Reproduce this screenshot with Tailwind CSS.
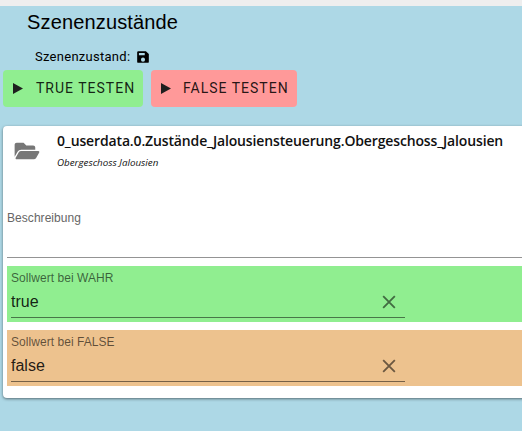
<!DOCTYPE html>
<html lang="de">
<head>
  <meta charset="UTF-8" />
  <title>Szenenzustände</title>
  <script src="https://cdn.jsdelivr.net/npm/@tailwindcss/browser@4"></script>
</head>
<body class="h-[431px] w-[522px] overflow-hidden bg-[#add8e6] font-['Liberation_Sans',sans-serif]">
  <div class="h-[6px] bg-[#eeeeee]"></div>
  <h1 class="pl-[27px] pt-[5px] text-[20px] tracking-[0.15px] leading-[23px] text-black">Szenenzustände</h1>
  <div class="flex items-center pl-[35px] pt-[13px] h-[32px] font-['Roboto',sans-serif] text-[13px] tracking-[0.27px] text-black">
    <span>Szenenzustand:</span>
    <svg class="ml-[6px] w-[14px] h-[14px]" viewBox="0 0 24 24" fill="#000"><path d="M17 2H4a2 2 0 0 0-2 2v16a2 2 0 0 0 2 2h16a2 2 0 0 0 2-2V7l-5-5zm-5 18a3.5 3.5 0 1 1 0-7 3.5 3.5 0 0 1 0 7zm3-11H5V5h10v4z"/></svg>
  </div>
  <div class="flex gap-2 pl-[3px] pt-[4px] font-['Roboto',sans-serif] text-[14px] tracking-[1px]">
    <button class="flex items-center w-[140px] h-[37px] pl-[9px] rounded bg-[#90ee90] text-black/87">
      <svg class="w-[13px] h-[13px] mr-[11px]" viewBox="0 0 13 13" fill="#1f1f1f"><path d="M1 1v11l10-5.500z"/></svg>
      TRUE TESTEN
    </button>
    <button class="flex items-center w-[146px] h-[37px] pl-[9px] rounded bg-[#ff9999] text-black/87">
      <svg class="w-[13px] h-[13px] mr-[10px]" viewBox="0 0 13 13" fill="#1f1f1f"><path d="M1 1v11l10-5.500z"/></svg>
      FALSE TESTEN
    </button>
  </div>
  <div class="ml-[3px] mt-[19px] w-[530px] h-[272px] rounded bg-white shadow-[0_1px_3px_rgba(0,0,0,0.5)]">
    <div class="flex h-[83px]">
      <svg class="ml-[11px] mt-[14px] w-[26px] h-[22px]" viewBox="0 0 576 512" fill="#777"><path d="M572.700 292.100 500.300 416.200A64 64 0 0 1 445 448H45c-18.500 0-30.100-20.100-20.700-36.100l72.400-124.200A64 64 0 0 1 152 256h400c18.500 0 30.100 20.100 20.700 36.100zM152 224h328v-48c0-26.500-21.500-48-48-48H272l-64-64H48C21.500 64 0 85.500 0 112v278l69.100-118.400C86.200 242.300 117.900 224 152 224z"/></svg>
      <div class="ml-[17px] pt-[5px]">
        <div class="font-['Open_Sans',sans-serif] font-semibold text-[14px] tracking-[-0.14px] leading-[20px] text-[#111] whitespace-nowrap">0_userdata.0.Zustände_Jalousiensteuerung.Obergeschoss_Jalousien</div>
        <div class="mt-[6px] font-['Open_Sans',sans-serif] italic text-[9.800px] leading-[12px] text-[#111]">Obergeschoss Jalousien</div>
      </div>
    </div>
    <div class="mx-[4px] h-[49px] border-b border-[#949494] text-[12px] tracking-[0.05px] text-[#666]">Beschreibung</div>
    <div class="ml-[4px] mt-[8px] h-[56px] bg-[#90ee90] px-[4px] pt-[5px]">
      <div class="text-[12px] tracking-[0.05px] leading-[14px] text-black/60">Sollwert bei WAHR</div>
      <div class="flex items-center justify-between w-[394px] h-[33px] pt-[2px] border-b border-black/50 text-[16px] text-black/87">
        <span>true</span>
        <svg class="mr-[6px] w-[20px] h-[20px]" viewBox="0 0 24 24" fill="none" stroke="#000" stroke-opacity="0.55" stroke-width="2.200"><path d="M5 5l14 14M19 5L5 19"/></svg>
      </div>
    </div>
    <div class="ml-[4px] mt-[8px] h-[56px] bg-[#edc28e] px-[4px] pt-[5px]">
      <div class="text-[12px] tracking-[0.05px] leading-[14px] text-black/60">Sollwert bei FALSE</div>
      <div class="flex items-center justify-between w-[394px] h-[33px] pt-[2px] border-b border-black/50 text-[16px] text-black/87">
        <span>false</span>
        <svg class="mr-[6px] w-[20px] h-[20px]" viewBox="0 0 24 24" fill="none" stroke="#000" stroke-opacity="0.55" stroke-width="2.200"><path d="M5 5l14 14M19 5L5 19"/></svg>
      </div>
    </div>
  </div>
</body>
</html>
